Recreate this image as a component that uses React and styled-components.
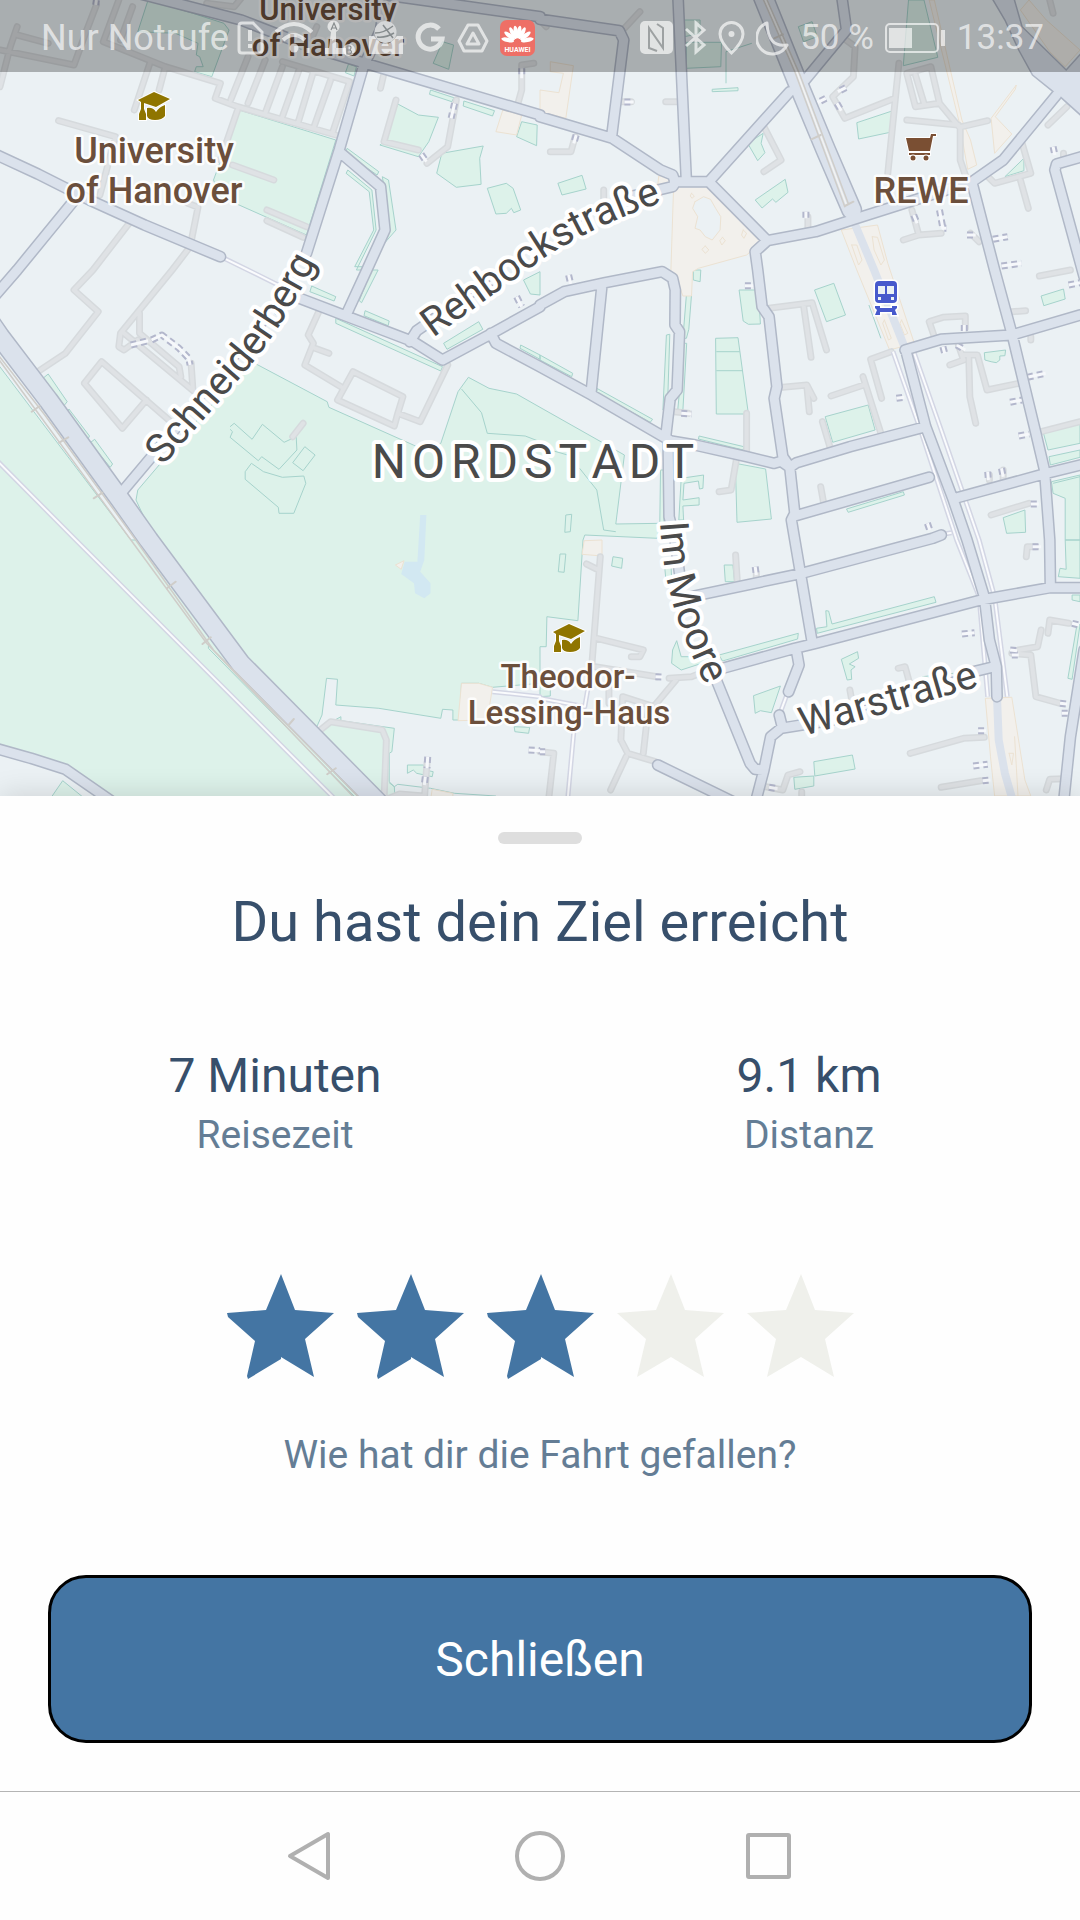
import React, { useState } from "react";
import styled, { createGlobalStyle } from "styled-components";

const GlobalStyle = createGlobalStyle`
  *, *::before, *::after { box-sizing: border-box; }
  body { margin: 0; background: #fefefe; font-family: Roboto, "Liberation Sans", sans-serif; }
`;

/* ---------- layout ---------- */

const Screen = styled.div`
  display: flex;
  flex-direction: column;
  min-height: 100vh;
`;

const MapArea = styled.section`
  position: relative;
  overflow: hidden;
`;

const StatusBar = styled.header`
  position: absolute;
  inset: 0 0 auto 0;
  display: flex;
  justify-content: space-between;
  align-items: center;
  height: 72px;
  padding: 4px 36px 0 41px;
  background: rgba(0, 0, 0, 0.28);
  color: rgba(255, 255, 255, 0.65);
  font-size: 35px;
  line-height: 44px;
  white-space: nowrap;
`;

const StatusGroup = styled.div`
  display: flex;
  align-items: center;
  gap: ${(p) => (p.$tight ? 8 : 11)}px;
`;

const Carrier = styled.span`
  font-size: 36px;
`;

const StatusIcon = styled.svg`
  display: block;
  flex: none;
  width: ${(p) => p.$w}px;
  height: 36px;
  fill: none;
  stroke: currentColor;
  stroke-width: 3;
`;

const Sheet = styled.main`
  position: relative;
  flex: 1;
  display: flex;
  flex-direction: column;
  align-items: center;
  padding: 36px 48px 48px;
  background: #fefefe;
  box-shadow: 0 0 28px rgba(0, 0, 0, 0.14);
`;

const Handle = styled.div`
  width: 84px;
  height: 12px;
  border-radius: 6px;
  background: #dedede;
`;

const Title = styled.h1`
  margin: 45px 0 93px;
  color: #374f6b;
  font-size: 56px;
  font-weight: 400;
  line-height: 66px;
`;

const Stats = styled.dl`
  align-self: stretch;
  display: grid;
  grid-template-columns: 1fr 1fr;
  margin: 0 -44px 0 -40px;
  text-align: center;
`;

const Stat = styled.div`
  display: flex;
  flex-direction: column-reverse;
  gap: 9px;
`;

const StatValue = styled.dd`
  margin: 0;
  color: #374f6b;
  font-size: 48px;
  line-height: 56px;
`;

const StatLabel = styled.dt`
  color: #647d95;
  font-size: 39px;
  line-height: 44px;
`;

const Rating = styled.fieldset`
  display: flex;
  flex-direction: column-reverse;
  align-items: center;
  gap: 53px;
  margin: 117px 0 98px;
  padding: 0;
  border: 0;
`;

const Question = styled.p`
  margin: 0;
  color: #647d95;
  font-size: 39px;
  line-height: 44px;
`;

const Stars = styled.div`
  display: flex;
`;

const StarLabel = styled.label`
  display: grid;
  cursor: pointer;
  > * { grid-area: 1 / 1; }
`;

const StarInput = styled.input`
  appearance: none;
  width: 100%;
  height: 100%;
  margin: 0;
`;

const StarShape = styled.svg`
  display: block;
  width: 130px;
  height: 106px;
  fill: ${(p) => (p.$on ? "#4475a3" : "#eff0eb")};
`;

const CloseButton = styled.button`
  align-self: stretch;
  padding: 54px 24px 52px;
  border: 3px solid #000;
  border-radius: 38px;
  background: #4475a3;
  color: #fff;
  font: 400 48px/56px Roboto, "Liberation Sans", sans-serif;
`;

const NavBar = styled.nav`
  position: relative;
  display: flex;
  justify-content: center;
  align-items: center;
  gap: 179px;
  height: 129px;
  border-top: 1px solid #b4b4b4;
  background: #fefefe;
`;

const NavButton = styled.button`
  display: block;
  padding: 0;
  border: 0;
  background: none;
`;

const NavIcon = styled.svg`
  display: block;
  width: 50px;
  height: 50px;
  fill: none;
  stroke: #b0b0b0;
  stroke-width: 4;
  stroke-linejoin: round;
`;

/* ---------- map ---------- */

const MapSvg = styled.svg`
  display: block;
  width: 100%;
  height: auto;
  background: #ebf1f4;
`;

const Park = styled.path`
  fill: #ddf2ea;
  stroke: #a6d3cc;
  stroke-width: 1;
`;

const ParkEdge = styled.path`
  fill: none;
  stroke: #a6d3cc;
  stroke-width: 1;
`;

const Land = styled.path`
  fill: #ebf1f4;
`;

const Plaza = styled.path`
  fill: #f2f0ec;
  stroke: #ece2d2;
  stroke-width: 1;
`;

const Water = styled.path`
  fill: #d2e8f2;
`;

const Line = styled.path`
  fill: none;
  stroke: ${(p) => p.$color};
  stroke-width: ${(p) => p.$w};
  stroke-linejoin: round;
  stroke-linecap: ${(p) => p.$cap || "round"};
  stroke-dasharray: ${(p) => p.$dash || "none"};
`;

const Place = styled.text`
  fill: #6b4f3c;
  stroke: rgba(255, 255, 255, 0.9);
  stroke-width: 5;
  stroke-linejoin: round;
  paint-order: stroke;
  text-anchor: middle;
  font-family: Roboto, "Liberation Sans", sans-serif;
  font-size: ${(p) => p.$size}px;
  font-weight: 500;
`;

const Street = styled.text`
  fill: #4a4a4a;
  stroke: #fff;
  stroke-width: 8;
  stroke-linejoin: round;
  paint-order: stroke;
  font-family: Roboto, "Liberation Sans", sans-serif;
  font-size: 40px;
`;

const District = styled(Street)`
  font-size: 48px;
  letter-spacing: 6px;
  text-anchor: middle;
`;

/* The map data is stored in six tiles (A B / C D / E F). Each tile covers
   540 x 270 map units with a grid of 1568 x 810; a letter in a point list
   switches to that tile. */
const TILES = { A: [0, 0], B: [540, 0], C: [0, 270], D: [540, 270], E: [0, 540], F: [540, 540] };

function trace(points, close) {
  let origin = TILES.A;
  const out = [];
  points.trim().split(/\s+/).forEach((token) => {
    if (TILES[token]) {
      origin = TILES[token];
      return;
    }
    const [x, y] = token.split(",").map(Number);
    const px = origin[0] + (x * 540) / 1568;
    const py = origin[1] + y / 3;
    out.push(px.toFixed(1) + " " + py.toFixed(1));
  });
  return "M" + out.join("L") + (close ? "Z" : "");
}

const traceAll = (list, close) => list.map((p) => trace(p, close)).join("");

const BIG_PARKS = [
  "C -30,250 380,810 E 440,0 700,370 920,560 935,525 948,415 980,418 975,495 1100,505 1280,535 1285,508 1315,510 1315,540 1335,540 1340,430 1390,430 1430,442 1568,430 F 0,470 30,468 30,430 0,420 0,320 18,320 20,230 110,242 125,0 D 130,795 340,805 350,760 220,762 245,555 0,412 C 1568,412 1500,372 1420,355 1360,322 1330,365 1280,520 1240,545 1200,525 955,412 950,395 740,280 590,430 400,660 395,690 440,790 E 700,370 920,570 990,530 990,542 1145,565 1138,635 1130,640 1130,725 1145,740 1150,820 -30,820",
];

const PARKS = [
  "A 695,330 975,420 890,705 640,590 620,540",
  "A 430,0 560,40 650,70 665,90 615,230 565,215 570,200 590,200 580,170 570,165 575,130 510,100 400,95",
  "A 1285,125 1317,135 1303,208 1258,190", "A 1012,192 1035,200 1028,228 1003,218",
  "A 1155,312 1215,345 1273,352 1245,425 1215,470 1103,435 1115,425",
  "A 1283,460 1403,438 1393,475 1397,553 1325,562 1268,520",
  "A 1415,565 1470,550 1490,565 1512,630 1492,638 1485,625 1470,640 1440,642",
  "A 1250,270 1318,293 1312,305 1247,283", "A 1347,303 1436,332 1430,348 1345,318", "A 1515,365 1560,375 1558,437 1500,410",
  "A 1008,445 1100,515 1095,525 1003,460", "A 1010,510 1080,570 1092,690 1035,810 1048,810 1150,690 1128,540 1110,530 1115,560 1132,690 1080,800 1030,800 1085,690 1072,575 1005,520",
  "B 52,550 122,526 134,567 64,585", "B 425,127 527,127 525,200 425,205", "B 1070,0 1115,0 1155,172 1055,197",
  "B 920,368 1022,333 1017,397 925,417", "B 603,430 648,400 642,430 653,458 632,482", "B 625,600 712,538 720,577 685,607 675,597 645,624",
  "B 1350,530 1405,475 1405,512", "B 750,80 790,65 805,110 765,125", "B 500,268 575,263 575,272 500,275", "B 420,60 465,60 465,100 420,110",
  "C 905,48 975,80 970,93 900,65", "C 1060,122 1130,153 1127,167 1057,137", "C 975,145 1285,290 1280,303 975,160",
  "C 1288,220 1390,155 1402,178 1298,238", "C 1078,0 1098,0 1050,98 1043,92", "C 1520,30 1568,5 1568,75 1540,72",
  "C 1512,225 1568,255 1568,268 1510,235", "C 125,325 140,312 195,395 185,408", "C 195,430 200,417 260,498 255,508", "C 262,518 275,508 327,582 320,592",
  "D 0,255 95,310 92,320 0,270", "D 165,355 327,448 320,457 165,368", "D 367,195 377,193 370,420 357,420", "D 425,75 440,75 432,178 425,205 415,205",
  "D 418,220 426,220 415,420 400,418", "D 578,60 628,60 638,125 640,162 605,163 590,153", "D 510,205 575,203 605,432 512,432",
  "D 797,60 853,40 887,135 832,155", "D 828,440 953,405 973,480 850,517", "D 567,580 655,597 672,747 572,757", "D 462,498 592,530 590,540 460,507",
  "D 890,717 1055,665 1058,675 895,727", "D 1290,248 1352,240 1350,257 1335,258 1335,270 1325,278 1310,275 1292,270", "D 1455,78 1520,57 1525,87 1463,107",
  "D 1462,490 1568,462 1568,520 1475,540", "D 1478,560 1568,540 1568,562 1482,585", "D 1345,743 1408,720 1410,787 1355,790",
  "D 410,625 475,615 473,655 463,657 460,633 418,640 415,690 462,683 462,705 415,708 417,750 403,750", "D 350,600 360,600 360,758 348,758",
  "D 445,0 467,0 465,35 445,30", "D 1485,635 1568,615 1568,810 1525,810 1525,685 1490,670",
  "F 535,75 560,75 565,125 538,125", "F 212,50 240,55 237,85 208,78", "F 520,345 750,280 748,297 530,363", "F 385,330 397,302 410,350 500,350 470,370 410,390 382,370",
  "F 803,265 833,260 830,212 838,213 848,252 1145,170 1150,187 805,280", "F 875,358 922,335 925,355 898,372 915,380 903,390 905,418 892,420",
  "F 620,467 698,438 672,518 640,512 625,520", "F 795,665 907,645 915,687 798,708", "F 737,712 795,708 795,738 740,748", "F 1545,165 1568,165 1568,185 1545,180",
  "F 1560,250 1568,255 1545,418 1533,415", "F 1525,0 1568,0 1568,115 1505,110 1510,85 1528,88", "F 360,60 380,60 382,120 366,122",
  "E 1493,560 1538,562 1535,580 1495,575", "E 1183,675 1230,675 1235,690 1258,695 1255,710 1210,700 1200,690 1183,700", "E 150,770 182,722 245,775",
];

const PARK_LINES = [
  "C 668,470 680,460 732,508 762,463 825,517 860,500 862,540 810,598 760,560 750,572 668,502 675,485 668,478",
  "C 712,605 730,580 765,605 820,622 882,618 888,640 853,730 810,730 808,712 712,628 712,605", "C 850,578 885,530 915,555 880,602 850,578",
  "C 1340,357 1398,428 1415,490 1525,498 1568,515 D 30,540 80,555", "D 115,595 165,660 185,780 220,785", "D 75,735 92,733 88,785 72,787 75,735",
  "D 512,245 580,245", "D 512,302 588,302", "F 58,42 75,42 70,97 53,95 58,42", "B 540,250 540,155 615,130", "D 955,105 990,205", "E 605,318 605,325 1030,770",
  "E 1130,728 1145,740 1155,733 1250,745 1320,760 1440,768", "F 1110,410 1200,400", "D 1490,640 1568,620", "B 550,645 575,672",
];

const PLAZAS = [
  "B 345,528 375,525 378,548 365,558 342,552", "B 388,560 495,555 652,718 600,765 460,805 D 443,5 440,78 415,78 400,35 378,5 B 380,810",
  "B 30,185 97,197 75,355 0,335 0,270 55,278 68,220 30,215", "A 1460,330 1515,345 1500,405 1440,395",
  "B 1130,0 1145,0 1225,360 1250,420 1268,495 1242,508 1218,370", "B 1310,355 1383,255 1380,268 1322,350 1370,402 1320,460",
  "B 875,690 980,675 1010,790 D 1087,220 1015,240 920,0", "B 1395,30 1420,0 1470,60 1568,150 1525,200 1480,155", "F 1293,475 1370,472 1408,720 1425,768 1320,768 1308,650",
  "F 128,2 180,0 180,48 122,43", "E 1340,430 1390,430 1430,442 1415,540 1330,542", "E 1255,748 1315,760 1315,780 1250,780",
];

const PLAZA_LINES = [
  "B 450,605 475,590 495,598 510,625 525,650 523,690 500,720 480,710 465,690 450,685 458,650 443,625 450,605",
  "B 480,738 490,750 480,760 470,748 480,738", "B 530,712 538,722 528,735 522,722 530,712", "B 440,580 448,588 442,595 436,588 440,580", "B 590,690 600,700 592,715 585,705 590,690",
  "B 905,735 920,735 935,780 925,795 905,735", "B 965,710 980,712 1000,780 990,795 970,750 965,710", "D 1000,150 1020,205 1012,210 995,160 1000,150", "D 1050,150 1068,190 1058,195 1045,160 1050,150",
  "F 1362,640 1375,640 1370,675 1362,640", "F 1378,590 1388,768",
];

const MINOR = [
  "A 50,80 30,140 0,260", "A 50,105 140,130", "A 0,150 215,195 250,95 280,15", "A 345,0 300,125", "A 385,20 350,120", "A 435,190 390,330", "A 480,200 462,270",
  "A 300,125 480,200 640,250 625,295 690,320 975,405", "A 720,170 670,300", "A 770,180 720,310", "A 820,200 770,340", "A 870,205 820,350", "A 910,215 865,370",
  "A 960,240 910,385", "A 820,185 1015,245 965,400", "A 920,80 890,150", "A 600,10 680,20 700,-5", "A 170,362 335,410 290,585", "A 690,330 640,480", "A 675,495 795,540",
  "A 775,630 890,680", "A 775,662 880,712", "A 375,670 270,810 C 215,60 285,125 190,250 110,305", "A 545,610 575,622 552,740 500,810 C 350,190 345,230 360,240 400,210",
  "A 1115,220 1105,265", "A 1150,300 1115,425 1215,450", "A 1325,300 1300,440 1240,490", "A 1550,190 1515,195 1515,270 1500,325",
  "C 405,130 405,190 520,290 525,320", "C 355,185 570,370", "C 555,280 560,360", "C 490,450 295,275 245,340 355,475 425,390",
  "C 930,115 895,195 910,220 885,285 990,350", "C 915,235 955,250", "C 1300,285 1220,455 1155,430 1170,380 1025,305 980,390 1145,468 1155,430", "C 850,500 880,460",
  "B 290,35 245,85", "B 235,305 265,305", "B 365,305 400,305", "B 30,455 90,455 102,410", "B 650,380 700,480 650,515", "B 875,110 915,140 910,230 850,290 885,355 1030,295",
  "B 1042,190 1010,520", "B 1065,220 1135,200 1160,310 1090,320 1065,220", "B 1090,225 1115,310", "B 1160,310 1220,385 1220,480 1240,540", "B 1065,360 1215,375", "B 1300,362 1225,380",
  "B 1530,320 1475,375", "B 1400,430 1425,520 1320,550 1290,520", "B 1395,540 1418,625", "B 1055,720 1100,705 1165,700", "B 1080,630 1100,705", "B 1250,700 1275,725", "B 778,650 778,690",
  "B 185,570 185,600", "B 0,60 18,80", "B 1480,0 1490,40", "B 1520,460 1520,480",
  "D 665,115 790,98 832,240", "D 765,105 787,262", "D 705,352 775,345 795,385", "D 775,350 782,425", "D 600,430 600,550", "D 570,570 555,660 520,665",
  "D 845,378 940,345", "D 938,320 990,490", "D 820,455 843,535", "D 1020,245 960,268 992,385", "D 815,650 823,695", "D 1145,200 1130,155 1170,142 1235,138 1235,175",
  "D 1215,225 1230,270 1190,285", "D 1230,255 1270,255 1298,360 1390,340", "D 1245,260 1248,380 1265,460", "D 1370,125 1410,122", "D 1450,18 1540,0", "D 1310,735 1420,700",
  "D 1455,485 1568,455", "D 390,425 430,430", "D 1425,200 1425,210", "D 1345,600 1345,630", "D 1305,615 1305,630",
  "E 930,570 960,545 1110,570 1122,600 1115,780", "E 1240,670 1232,780", "E 1130,775 1160,762 1230,768",
  "F 175,50 150,380", "F 135,72 170,90", "F 165,295 300,330 290,350 265,350", "F 160,380 340,410", "F 375,415 440,410 490,390", "F 395,420 330,500", "F 200,440 200,490",
  "F 235,600 240,470 330,500", "F 235,600 255,640 335,665", "F 315,500 300,640", "F 250,650 205,750", "F 0,635 40,640 25,780", "F 568,45 573,125", "F 628,100 628,115",
  "F 1412,50 1415,20 1440,20", "F 1475,280 1480,240 1535,250", "F 1455,270 1445,320 1390,330", "F 1370,340 1425,345 1440,470 1510,490", "F 1075,640 1230,595 1290,592",
  "F 1165,742 1280,722", "F 1470,750 1480,718 1520,716", "F 655,740 705,750 720,705 755,695", "F 900,450 905,480", "F 1040,385 1060,380 1072,425", "F 760,755 760,780",
];

const ROADS = [
  "A -30,455 110,522 260,600 420,675 640,770", "A 220,595 50,810 C -30,95",
  "A 1115,20 1105,90 1055,200 985,450 890,760", "A 985,455 1105,560 1118,690 1065,810 C 1005,135",
  "A 400,-20 700,60 900,140 1060,190 1568,345 B 0,350 210,415 350,510 385,525 392,545",
  "C 870,85 1010,140 1200,215 1285,270 1420,195 1568,110 D 0,105 70,65 190,38 355,5 385,25 393,60 392,165 405,185 398,360 378,385 365,500",
  "C 1190,215 1210,182 1290,125", "B 240,595 385,560 395,545", "C 1425,190 1440,220 1568,290 D 0,290 150,375 350,495 380,513 450,525 600,560 680,580 700,574 725,592 745,578 900,530 1120,470",
  "D 180,45 148,370", "D 372,510 375,740 392,810 F 405,100", "F 500,390 610,670 625,688 648,690",
  "B 660,722 625,755 632,810 D 645,110 665,140 688,350 680,385 705,560 725,590 740,730 730,750 740,810 F 790,305",
  "A 1120,-15 1568,50 B 0,58 230,92 243,120 208,410", "B 400,-20 425,545", "B 390,545 490,545 660,722 800,695 905,660 1255,545 1345,480 1500,285", "B 490,545 725,275",
  "B 770,240 890,90 875,-20", "D 1060,240 1165,208 1370,195 1568,135", "B 1255,550 1320,810 D 1370,190 1440,490 1465,600 1480,810 F 1482,140",
  "B 1590,465 1500,492 1495,510 1580,830", "D 1205,685 1470,610 1590,580", "D 740,738 1130,622", "F 440,170 760,100 1140,-5 D 1165,795",
  "F 530,385 740,325 800,310 1280,180 1480,143 1590,143", "F 745,335 752,375 722,455", "F 695,525 702,555", "F 625,790 650,690 670,590 700,565 850,540", "F 1260,395 1320,380",
  "F 342,675 570,790", "F 1580,330 1540,590 1520,790", "E -30,620 90,655 190,688 340,795", "C 530,450 355,665",
  "D 1062,240 1120,470 1200,690 1240,810 F 1290,170 1305,300 1325,380 1327,470", 
];

const WIDE_ROADS = [
  "C -50,125 0,200 140,390 350,690 432,810 E 698,370 880,560 1100,790", "B 640,-30 745,240 830,450 905,630",
];

const FOOTPATHS = [
  "A 645,772 720,810 C 885,85", "C -20,560 220,810 E 980,785", "D 1025,245 1105,480 1210,810 F 1275,170 1300,470", "D 1085,245 1165,480 1275,810 F 1320,170 1357,470",
  "F 720,455 697,520", "E 1430,455 1568,470 F 0,475 130,500 150,380", "F 100,555 80,780", "D 1170,793 1195,788",
];

const STEPS = [
  "C 860,45 520,465", "A 1320,310 1310,355", "A 1223,463 1238,485", "A 1515,205 1515,235", "A 280,0 278,15", "B 105,405 98,430", "B 245,306 272,306", "B 772,635 772,655",
  "B 888,263 865,275", "B 830,295 805,308", "B 862,310 875,332", "B 1085,645 1095,670", "B 1160,630 1170,685 1180,685", "B 1490,440 1495,465", "B 1240,705 1265,705", "B 1315,718 1358,710",
  "B 1340,798 1398,790", "B 200,620 60,680", "C 440,210 470,195 520,235 548,265 552,285", "C 380,225 430,212", "C 1500,80 1515,110", "C 1240,160 1440,30",
  "D 83,15 90,45", "D 595,47 622,47", "D 410,430 440,432", "D 1035,385 1058,382", "D 1170,230 1175,250", "D 1232,165 1232,190", "D 1210,225 1235,240", "D 1415,322 1468,310", "D 1365,397 1400,390",
  "D 1390,498 1420,492", "D 1300,605 1302,630", "D 1340,595 1345,620", "D 1125,760 1132,780", "D 1425,702 1448,702", "D 1535,45 1568,38", "E 1242,650 1240,685", "E 1235,710 1232,735", "E 1535,630 1568,632",
  "F 625,80 628,105", "F 335,410 355,411", "F 1430,20 1455,20", "F 1225,282 1262,278", "F 1365,330 1385,332", "F 1370,345 1390,345", "F 1545,250 1565,255", "F 1510,490 1530,492", "F 1515,520 1540,520",
  "F 1272,572 1295,572", "F 1258,678 1300,673", "F 1285,722 1308,720", "F 665,742 690,746", "F 0,635 15,635", "F 860,530 1260,400",
];

const RAILS = [
  "C -20,235 130,435 380,790 E 620,330 1050,780", "C -20,245 380,810 E 600,310 1035,780", "B 645,-10 740,215 885,620", "B 655,-10 755,225 895,610",
];

const TIES = ["C 92,425 115,408", "C 172,518 198,502", "C 272,685 298,668", "E 485,145 510,125", "E 588,312 612,292", "E 838,555 853,537", "E 950,703 975,685", "B 788,418 815,405", "B 680,115 705,103", "B 885,618 910,605"];

function GradCap({ x, y }) {
  return (
    <g transform={`translate(${x} ${y})`} fill="#8f7500" stroke="#fff" strokeWidth="2" paintOrder="stroke">
      <path d="M16 0L32 7L18 15L6 11V17L8 22V28H1V22L3 17V10L0 8Z" />
      <path d="M9 16Q15 15 18 20Q21 15 27 13V24Q24 28 17 28Q10 28 9 24Z" />
    </g>
  );
}

function CityMap() {
  return (
    <MapSvg viewBox="0 0 1080 796" role="img" aria-label="Karte: Nordstadt">
      <Park d={traceAll(BIG_PARKS, true)} />
      <Land d={trace("E -10,640 90,670 190,700 320,790 -10,790", true)} />
      <Park d={traceAll(PARKS, true)} />
      <ParkEdge d={traceAll(PARK_LINES)} />
      <Plaza d={traceAll(PLAZAS, true)} />
      <Land d={trace(PLAZA_LINES[0], true)} />
      <Line d={traceAll(PLAZA_LINES)} $color="#ece2d2" $w={1} />
      <Water d={trace("C 1220,735 1238,735 E 1232,60 1220,95 1250,130 1250,160 1232,175 1205,160 1202,130 1165,102 1175,65 1212,65", true)} />
      <Plaza d={trace("E 1148,75 1173,62 1165,88", true)} />

      <Line d={traceAll(MINOR)} $color="#d6dadd" $w={7} />
      <Line d={traceAll(MINOR)} $color="#dfe2e5" $w={4} />
      <Line d={traceAll(FOOTPATHS)} $color="#d3d6e4" $w={5} $cap="butt" />
      <Line d={traceAll(FOOTPATHS)} $color="#fafbfd" $w={2} $cap="butt" />
      <Line d={traceAll(STEPS)} $color="#b3b7cc" $w={7} $cap="butt" $dash="6 4" />
      <Line d={traceAll(STEPS)} $color="#f6f8fb" $w={3} $cap="butt" />

      <Line d={trace("B 905,650 970,810 D 1062,240")} $color="#dbe2ec" $w={8} />
      <Line d={trace("F 1327,470 1332,600 1350,700 1375,790")} $color="#dbe2ec" $w={8} />
      <Line d={traceAll(WIDE_ROADS)} $color="#b0b8c7" $w={21} />
      <Line d={traceAll(ROADS)} $color="#b0b8c7" $w={12} />
      <path d={trace("B 1310,-10 1375,-10 1400,80 1528,210 1580,150 1580,355 1510,290 1490,275 1430,225 1390,150 1350,60", true)} fill="#dbe2ec" stroke="#b0b8c7" strokeWidth="1.5" />
      <Line d={traceAll(WIDE_ROADS)} $color="#dbe2ec" $w={18} />
      <Line d={traceAll(ROADS)} $color="#dbe2ec" $w={9} />
      <Line d={traceAll(RAILS)} $color="#cfcdc9" $w={1.5} />
      <Line d={trace("B 650,-10 748,222 890,615")} $color="#f3f3f1" $w={1.5} />
      <Line d={traceAll(TIES)} $color="#cfcdc9" $w={2} />

      <GradCap x={138} y={92} />
      <GradCap x={553} y={624} />
      <g transform="translate(906 134)" fill="#7a4f33" stroke="#fff" strokeWidth="2" paintOrder="stroke">
        <path d="M0 4H24L25 0H30V2H27L24 17H3Z" />
        <path d="M3 19H24V21H3Z" />
        <circle cx="7" cy="24" r="2.5" />
        <circle cx="20" cy="24" r="2.5" />
      </g>
      <g transform="translate(875 281)">
        <path d="M4 0H18Q22 0 22 4V18Q22 22 18 22H4Q0 22 0 18V4Q0 0 4 0ZM0 25H5V27H17V25H22V27L20 29L22 34H17V31H5V34H0L2 29L0 27Z" fill="#4759cc" stroke="#fff" strokeWidth="3" paintOrder="stroke" />
        <path d="M3 5H10V13H3ZM12 5H19V13H12ZM3 16H6V19H3ZM16 16H19V19H16Z" fill="#ebf1f4" />
      </g>

      <Place $size={31}>
        <tspan x="328" y="20">University</tspan>
        <tspan x="328" y="56">of Hanover</tspan>
      </Place>
      <Place $size={36}>
        <tspan x="154" y="163">University</tspan>
        <tspan x="154" y="203">of Hanover</tspan>
      </Place>
      <Place $size={36} x="921" y="203">REWE</Place>
      <Place $size={33}>
        <tspan x="568" y="688">Theodor-</tspan>
        <tspan x="569" y="724">Lessing-Haus</tspan>
      </Place>

      <path id="schneiderberg" d="M163 466L246 371Q292 316 336 222" fill="none" />
      <path id="rehbock" d="M433 338L540 261Q590 226 680 196" fill="none" />
      <path id="immoore" d="M660 522C664 580 670 615 720 715" fill="none" />
      <path id="warstrasse" d="M803 736Q890 713 1010 677" fill="none" />
      <Street><textPath href="#schneiderberg">Schneiderberg</textPath></Street>
      <Street><textPath href="#rehbock">Rehbockstraße</textPath></Street>
      <Street><textPath href="#immoore">Im Moore</textPath></Street>
      <Street><textPath href="#warstrasse">Warstraße</textPath></Street>
      <District x="536" y="478">NORDSTADT</District>
    </MapSvg>
  );
}

/* ---------- status bar ---------- */

function Status() {
  return (
    <StatusBar>
      <StatusGroup $tight>
        <Carrier>Nur Notrufe</Carrier>
        <StatusGroup>
          <StatusIcon $w={27} viewBox="0 0 27 36">
            <path d="M5 3H16L25 12V30Q25 33 22 33H5Q2 33 2 30V6Q2 3 5 3Z" />
            <path d="M13 10V21M13 24V28" strokeWidth="4" />
          </StatusIcon>
          <StatusIcon $w={38} viewBox="0 0 38 36">
            <path d="M1 12Q19 -4 37 12M8 20Q19 10 30 20" strokeWidth="4" />
            <circle cx="19" cy="28" r="4.5" fill="currentColor" stroke="none" />
            <path d="M33 28V33" />
          </StatusIcon>
          <StatusIcon $w={34} viewBox="0 0 34 36">
            <path d="M1 34V28H5L7 12A6 6 0 1 1 12 12V28H22V34Z" fill="currentColor" stroke="none" />
            <circle cx="25" cy="30" r="6" fill="currentColor" stroke="none" />
            <path d="M7 10L10 3L13 10M8 8H12" stroke="#888d8f" strokeWidth="1.2" />
            <path d="M23 26V34H26Q29 32 26 30Q28 27 26 26ZM23 30H26" stroke="#888d8f" strokeWidth="1.2" />
          </StatusIcon>
          <StatusIcon $w={34} viewBox="0 0 34 36">
            <path d="M0 16H5Q16 32 28 16H34V34H0Z" fill="currentColor" stroke="none" />
            <circle cx="16.5" cy="12" r="11" fill="#d5d7d8" stroke="none" />
            <path d="M6 13Q15 13 24 6M8 17Q17 18 25 13M14 5L24 18" stroke="#858b8d" strokeWidth="1.5" />
          </StatusIcon>
          <StatusIcon $w={32} viewBox="0 0 32 36">
            <path d="M25 9A12 12 0 1 0 28 19H17" strokeWidth="5" />
          </StatusIcon>
          <StatusIcon $w={32} viewBox="0 0 32 36" strokeLinejoin="round">
            <path d="M11 5H21L30 21L25 31H7L2 21Z" />
            <path d="M16 13L22 24H10Z" />
          </StatusIcon>
          <StatusIcon $w={35} viewBox="0 0 35 36">
            <rect x="0" y="0" width="35" height="36" rx="7" fill="#ee6f66" stroke="none" />
            <g fill="#fff" stroke="none">
              {[-78, -52, -28, -9, 9, 28, 52, 78].map((a) => (
                <ellipse key={a} cx="17.5" cy="12" rx="2.2" ry="6.5" transform={`rotate(${a} 17.5 22)`} />
              ))}
            </g>
            <text x="17.5" y="32" fill="#fff" stroke="none" fontSize="7" fontWeight="700" textAnchor="middle">HUAWEI</text>
          </StatusIcon>
        </StatusGroup>
      </StatusGroup>
      <StatusGroup>
        <StatusIcon $w={33} viewBox="0 0 33 36">
          <rect x="0" y="1" width="33" height="33" rx="5" fill="currentColor" stroke="none" />
          <path d="M17 31L9 28V8L23 28V8L17 4" stroke="#9da1a2" strokeWidth="2" />
        </StatusIcon>
        <StatusIcon $w={23} viewBox="0 0 23 36">
          <path d="M2 9L20 25L12 32V3L20 10L2 26" />
        </StatusIcon>
        <StatusIcon $w={27} viewBox="0 0 27 36">
          <path d="M13.5 33Q2 22 2 14A11.5 11.5 0 0 1 25 14Q25 22 13.5 33Z" />
          <circle cx="13.5" cy="14" r="3" fill="currentColor" stroke="none" />
        </StatusIcon>
        <StatusIcon $w={33} viewBox="0 0 33 36">
          <path d="M11 3A16 16 0 1 0 31 25Q12 28 11 3Z" strokeLinejoin="round" />
        </StatusIcon>
        <span>50 %</span>
        <StatusIcon $w={61} viewBox="0 0 61 36">
          <rect x="1" y="4" width="52" height="28" rx="4" strokeWidth="2" />
          <path d="M4 8H27V28H4ZM56 10H60V26H56Z" fill="currentColor" stroke="none" />
        </StatusIcon>
        <span>13:37</span>
      </StatusGroup>
    </StatusBar>
  );
}

/* ---------- rating ---------- */

const STAR_ON = "66,0 80,36 119,39 90,65 99,103 66,83 66,85 33,105 32,102 40,67 13,43 12,39 51,36";
const STAR_OFF = "66,0 80,36 119,39 90,65 99,103 66,83 32,103 41,65 12,39 51,36";

function StarRating() {
  const [rating, setRating] = useState(3);
  return (
    <Rating aria-labelledby="question">
      <Question id="question">Wie hat dir die Fahrt gefallen?</Question>
      <Stars>
        {[1, 2, 3, 4, 5].map((n) => (
          <StarLabel key={n}>
            <StarShape viewBox="0 0 130 106" $on={n <= rating} aria-hidden="true">
              <polygon points={n <= rating ? STAR_ON : STAR_OFF} />
            </StarShape>
            <StarInput type="radio" name="rating" value={n} aria-label={`${n} von 5 Sternen`} checked={rating === n} onChange={() => setRating(n)} />
          </StarLabel>
        ))}
      </Stars>
    </Rating>
  );
}

export default function App() {
  return (
    <Screen>
      <GlobalStyle />
      <MapArea>
        <CityMap />
        <Status />
      </MapArea>
      <Sheet>
        <Handle />
        <Title>Du hast dein Ziel erreicht</Title>
        <Stats>
          <Stat>
            <StatLabel>Reisezeit</StatLabel>
            <StatValue>7 Minuten</StatValue>
          </Stat>
          <Stat>
            <StatLabel>Distanz</StatLabel>
            <StatValue>9.1 km</StatValue>
          </Stat>
        </Stats>
        <StarRating />
        <CloseButton type="button">Schließen</CloseButton>
      </Sheet>
      <NavBar>
        <NavButton type="button" aria-label="Zurück">
          <NavIcon viewBox="0 0 50 50"><path d="M42 3V47L4 25Z" /></NavIcon>
        </NavButton>
        <NavButton type="button" aria-label="Startbildschirm">
          <NavIcon viewBox="0 0 50 50"><circle cx="25" cy="25" r="23" /></NavIcon>
        </NavButton>
        <NavButton type="button" aria-label="Letzte Apps">
          <NavIcon viewBox="0 0 50 50"><rect x="4" y="4" width="41" height="42" rx="1" /></NavIcon>
        </NavButton>
      </NavBar>
    </Screen>
  );
}
